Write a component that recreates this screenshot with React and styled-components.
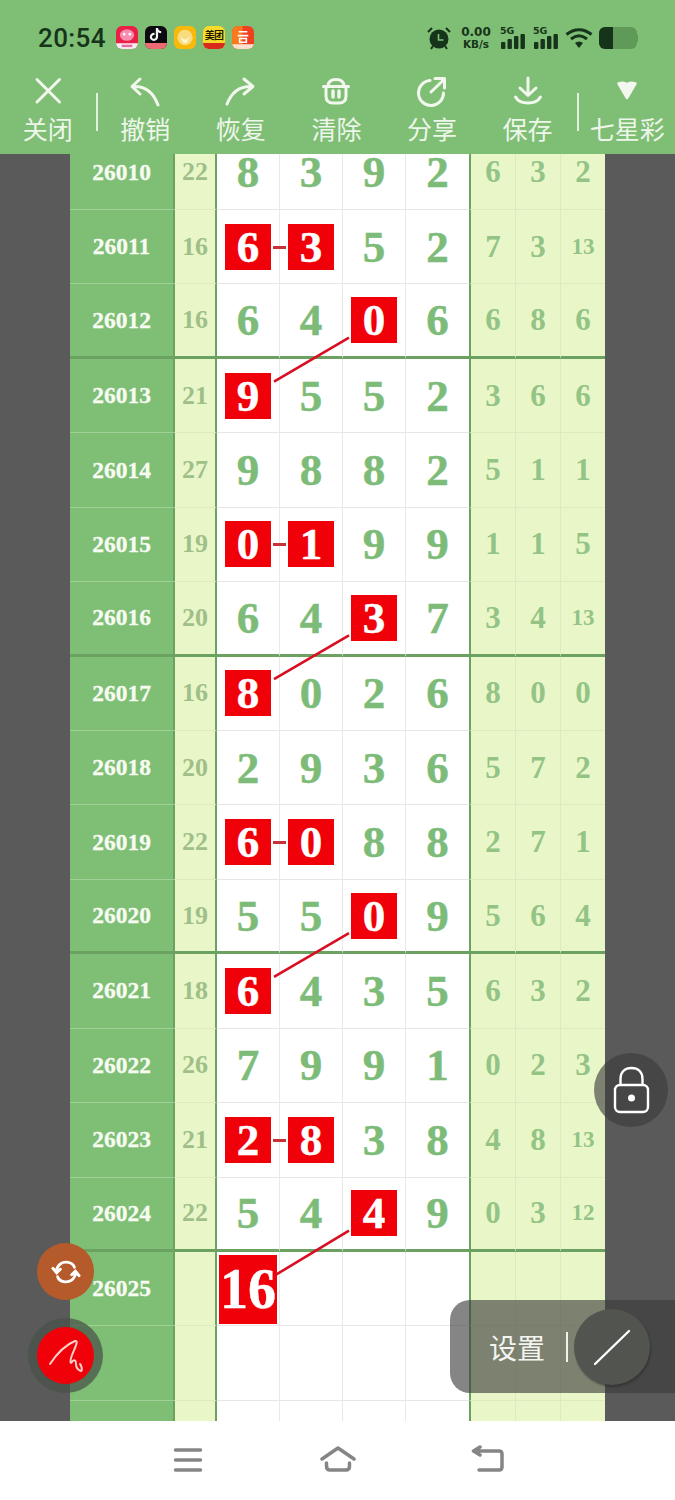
import React from "react";
import styled, { createGlobalStyle } from "styled-components";
import { FaTiktok } from "react-icons/fa6";

const ROW_H = 74.43;
const SCROLL_TOP = 18.4;

const GlobalStyle = createGlobalStyle`
  html, body {
    margin: 0;
    padding: 0;
    background: #fff;
  }
  * {
    box-sizing: border-box;
  }
`;

const Screen = styled.div`
  width: 675px;
  height: 1500px;
  display: flex;
  flex-direction: column;
  position: relative;
  overflow: hidden;
  font-family: "Noto Sans CJK SC", "Noto Sans", sans-serif;
`;

const Header = styled.header`
  height: 154px;
  flex: none;
  background: #7fbe75;
  display: flex;
  flex-direction: column;
  position: relative;
  z-index: 2;
`;

const StatusBar = styled.div`
  height: 75px;
  display: flex;
  align-items: center;
  justify-content: space-between;
  padding: 0 36px 0 38px;
`;

const StatusLeft = styled.div`
  display: flex;
  align-items: center;
`;

const Clock = styled.span`
  font-family: Roboto, sans-serif;
  font-weight: 500;
  font-size: 26px;
  letter-spacing: 0.4px;
  color: #16341a;
  margin-right: 10px;
`;

const AppIcons = styled.div`
  display: flex;
  gap: 7px;
`;

const AppIcon = styled.div`
  width: 22px;
  height: 23px;
  border-radius: 6px;
  overflow: hidden;
  display: flex;
  flex-direction: column;
  align-items: center;
  justify-content: center;
  background: ${(p) => p.$bg};
  position: relative;
`;

const AppStrip = styled.div`
  position: absolute;
  left: 0;
  right: 0;
  bottom: 0;
  height: ${(p) => p.$h || 6}px;
  background: ${(p) => p.$bg};
`;

const MeituanText = styled.span`
  font-size: 10px;
  line-height: 12px;
  font-weight: 700;
  color: #221a00;
  white-space: nowrap;
  margin-top: -5px;
  letter-spacing: -0.8px;
`;

const StatusRight = styled.div`
  display: flex;
  align-items: center;
`;

const SignalGap = styled.div`
  width: 7px;
`;

const WifiIcon = styled.svg`
  margin: 0 6px;
`;

const NetSpeed = styled.div`
  font-family: "DejaVu Sans", sans-serif;
  font-weight: 700;
  color: #16341a;
  display: flex;
  flex-direction: column;
  align-items: center;
  width: 32px;
  margin: 0 8px 0 9px;
`;

const SpeedValue = styled.span`
  font-size: 12px;
  line-height: 13px;
`;

const SpeedUnit = styled.span`
  font-size: 10.5px;
  line-height: 11px;
`;

const Toolbar = styled.nav`
  display: flex;
  align-items: flex-start;
`;

const ToolItem = styled.button`
  width: ${(p) => (p.$wide ? 96 : 95.8)}px;
  height: 79px;
  padding: 0;
  border: 0;
  background: none;
  display: flex;
  flex-direction: column;
  align-items: center;
  color: #eef6ea;
  font-family: inherit;
`;

const ToolIcon = styled.svg`
  width: 32px;
  height: 32px;
  flex: none;
  fill: none;
  stroke: #f3f8ef;
  stroke-width: 3;
  stroke-linecap: round;
  stroke-linejoin: round;
`;

const ToolLabel = styled.span`
  font-size: 25px;
  line-height: 32px;
  margin-top: 5px;
  white-space: nowrap;
`;

const ToolDivider = styled.div`
  width: 2px;
  height: 38px;
  margin-top: 18px;
  margin-left: ${(p) => p.$offset || 0}px;
  flex: none;
  background: #e4f0de;
`;

const Main = styled.main`
  flex: 1;
  min-height: 0;
  background: #5a5a5a;
  overflow: hidden;
  display: flex;
  justify-content: center;
`;

const Sheet = styled.div`
  width: 535px;
  flex: none;
  margin-top: ${-SCROLL_TOP}px;
  position: relative;
  align-self: flex-start;
`;

const Row = styled.div`
  display: grid;
  grid-template-columns: 103px 44px repeat(4, 63px) 47px 45px 44px;
  height: ${ROW_H}px;
`;

const Cell = styled.div`
  display: flex;
  align-items: center;
  justify-content: center;
  position: relative;
  font-family: "Liberation Serif", "Times New Roman", serif;
  font-weight: 700;
  border-bottom: ${(p) => (p.$thick ? "3px solid #6ba262" : `1px solid ${p.$line}`)};
`;

const IdCell = styled(Cell)`
  background: #7fbe75;
  color: #f7fbf2;
  font-size: 23.5px;
  -webkit-text-stroke: 0.3px #f7fbf2;
`;

const SumCell = styled(Cell)`
  background: #e9f7c8;
  color: #a0bf88;
  font-size: 26px;
  border-left: 2px solid #6ba262;
  border-right: 2px solid #6ba262;
`;

const DrawCell = styled(Cell)`
  background: #fff;
  color: #7dbc78;
  font-size: 45px;
  border-right: 1px solid #e9e9e9;
  -webkit-text-stroke: 0.5px currentColor;

  &:nth-child(6) {
    border-right: 0;
  }
`;

const RedBox = styled.span`
  width: ${(p) => (p.$big ? 58 : 46)}px;
  height: ${(p) => (p.$big ? 69 : 46)}px;
  background: #f00008;
  color: #fff;
  font-size: ${(p) => (p.$big ? 56 : 45)}px;
  display: flex;
  align-items: center;
  justify-content: center;
  flex: none;
  margin-top: ${(p) => (p.$big ? 1 : 0)}px;
`;

const Dash = styled.span`
  position: absolute;
  right: -7px;
  top: 50%;
  width: 13px;
  height: 3px;
  margin-top: -1px;
  background: #c8303a;
  z-index: 1;
`;

const ExtraCell = styled(Cell)`
  background: #e9f7c8;
  color: #93c486;
  font-size: ${(p) => (p.$small ? 23 : 31)}px;
  border-right: 1px solid #dcebbe;
  border-left: ${(p) => (p.$first ? "2px solid #6ba262" : "0")};

  &:last-child {
    border-right: 0;
  }
`;

const LinkLayer = styled.svg`
  position: absolute;
  left: 0;
  top: 0;
  width: 535px;
  height: 1300px;
  pointer-events: none;
`;

const NavBar = styled.footer`
  height: 79px;
  flex: none;
  background: #fff;
  display: flex;
  align-items: flex-start;
  justify-content: center;
  gap: 114px;
  padding-top: 24px;
  position: relative;
  z-index: 2;
`;

const NavIcon = styled.svg`
  width: 36px;
  height: 36px;
  fill: none;
  stroke: #858585;
  stroke-width: 3.5;
  stroke-linecap: round;
  stroke-linejoin: round;
`;

const Float = styled.div`
  position: absolute;
  z-index: 1;
  border-radius: 50%;
  display: flex;
  align-items: center;
  justify-content: center;
`;

const LockButton = styled(Float)`
  left: 594px;
  top: 1053px;
  width: 74px;
  height: 74px;
  background: rgba(58, 58, 58, 0.62);
`;

const SyncButton = styled(Float)`
  left: 37px;
  top: 1243px;
  width: 57px;
  height: 57px;
  background: #b45a2b;
`;

const PenRing = styled(Float)`
  left: 28px;
  top: 1318px;
  width: 75px;
  height: 75px;
  background: rgba(72, 80, 72, 0.72);
`;

const PenButton = styled.div`
  width: 57px;
  height: 57px;
  border-radius: 50%;
  background: #f00008;
  display: flex;
  align-items: center;
  justify-content: center;
`;

const SettingsPanel = styled.div`
  position: absolute;
  z-index: 1;
  left: 450px;
  top: 1300px;
  width: 225px;
  height: 93px;
  border-radius: 20px 0 0 20px;
  background: rgba(58, 58, 58, 0.62);
  display: flex;
  align-items: center;
  padding-left: 39px;
  color: #f4f4f0;
`;

const SettingsLabel = styled.span`
  font-size: 28px;
  line-height: 36px;
`;

const SettingsDivider = styled.div`
  width: 2px;
  height: 30px;
  background: #f0f0ec;
  margin-left: 21px;
`;

const PenToggle = styled.div`
  width: 76px;
  height: 76px;
  margin-left: 6px;
  border-radius: 50%;
  background: #525450;
  box-shadow: 1px 2px 2px rgba(40, 40, 40, 0.55);
  display: flex;
  align-items: center;
  justify-content: center;
`;

const rows = [
  ["26010", "22", "8392", ["6", "3", "2"]],
  ["26011", "16", "6352", ["7", "3", "13"], [0, 1], true],
  ["26012", "16", "6406", ["6", "8", "6"], [2]],
  ["26013", "21", "9552", ["3", "6", "6"], [0]],
  ["26014", "27", "9882", ["5", "1", "1"]],
  ["26015", "19", "0199", ["1", "1", "5"], [0, 1], true],
  ["26016", "20", "6437", ["3", "4", "13"], [2]],
  ["26017", "16", "8026", ["8", "0", "0"], [0]],
  ["26018", "20", "2936", ["5", "7", "2"]],
  ["26019", "22", "6088", ["2", "7", "1"], [0, 1], true],
  ["26020", "19", "5509", ["5", "6", "4"], [2]],
  ["26021", "18", "6435", ["6", "3", "2"], [0]],
  ["26022", "26", "7991", ["0", "2", "3"]],
  ["26023", "21", "2838", ["4", "8", "13"], [0, 1], true],
  ["26024", "22", "5449", ["0", "3", "12"], [2]],
];

// row index of the top box of each red connector
const linkRows = [2, 6, 10, 14];

function BlankRow({ id, big }) {
  return (
    <Row>
      <IdCell $line="#9fd095">{id}</IdCell>
      <SumCell $line="#dcebbe" />
      <DrawCell $line="#e6e6e6">
        {big && <RedBox $big>{big}</RedBox>}
      </DrawCell>
      <DrawCell $line="#e6e6e6" />
      <DrawCell $line="#e6e6e6" />
      <DrawCell $line="#e6e6e6" />
      <ExtraCell $first $line="#dcebbe" />
      <ExtraCell $line="#dcebbe" />
      <ExtraCell $line="#dcebbe" />
    </Row>
  );
}

function DataRow({ row, index }) {
  const [id, sum, digits, extras, marks = [], dash] = row;
  const thick = index % 4 === 2;
  return (
    <Row>
      <IdCell $line="#9fd095" $thick={thick}>{id}</IdCell>
      <SumCell $line="#dcebbe" $thick={thick}>{sum}</SumCell>
      {digits.split("").map((d, i) => (
        <DrawCell key={i} $line="#e6e6e6" $thick={thick}>
          {marks.includes(i) ? <RedBox>{d}</RedBox> : d}
          {dash && i === 0 && <Dash />}
        </DrawCell>
      ))}
      {extras.map((e, i) => (
        <ExtraCell key={i} $first={i === 0} $small={e.length > 1} $line="#dcebbe" $thick={thick}>
          {e}
        </ExtraCell>
      ))}
    </Row>
  );
}

function Links() {
  return (
    <LinkLayer viewBox="0 0 535 1300">
      {linkRows.map((r) => {
        const y1 = (r + 0.5) * ROW_H + 15.5;
        const y2 = (r + 1.5) * ROW_H - 15;
        return (
          <line
            key={r}
            x1="279"
            y1={y1}
            x2={r === 14 ? 206 : 204}
            y2={y2}
            stroke="#d80f22"
            strokeWidth="2.6"
          />
        );
      })}
    </LinkLayer>
  );
}

function StatusIcons() {
  return (
    <AppIcons>
      <AppIcon $bg="#ea1f45">
        <svg width="22" height="23" viewBox="0 0 23 24">
          <ellipse cx="11.5" cy="9.5" rx="7.5" ry="6" fill="#f88db0" />
          <circle cx="8.5" cy="8.5" r="1.4" fill="#fff" />
          <circle cx="14.5" cy="8.5" r="1.4" fill="#fff" />
          <rect x="0" y="18" width="23" height="6" fill="#f7eef5" />
          <rect x="6" y="19.5" width="11" height="2.5" fill="#e86aa0" />
        </svg>
      </AppIcon>
      <AppIcon $bg="#0c0a10">
        <FaTiktok size={13} color="#f4f4f6" style={{ marginTop: -6 }} />
        <AppStrip $bg="#ef6a72" />
      </AppIcon>
      <AppIcon $bg="#f9b90a">
        <svg width="22" height="23" viewBox="0 0 23 24">
          <circle cx="11.5" cy="12" r="8" fill="#f7dd80" />
          <path d="M7 11 Q11.5 17 16 11 Q14 19 11.5 17.5 Q9 19 7 11Z" fill="#fff6d0" />
        </svg>
      </AppIcon>
      <AppIcon $bg="#f9da2b">
        <MeituanText>美团</MeituanText>
        <AppStrip $bg="#d92a1c" />
      </AppIcon>
      <AppIcon $bg="#f0401f">
        <svg width="22" height="23" viewBox="0 0 23 24">
          <rect x="0" y="0" width="11" height="24" fill="#f97a1e" />
          <path d="M7 6h9M6 10h11M8 13h7v4H8z" stroke="#fff" strokeWidth="1.7" fill="none" />
          <rect x="0" y="19" width="23" height="5" fill="#fbe0d0" />
        </svg>
      </AppIcon>
    </AppIcons>
  );
}

function SignalIcon() {
  return (
    <svg width="26" height="24" viewBox="0 0 26 24">
      <text x="0" y="8" fontFamily="'DejaVu Sans', sans-serif" fontWeight="700" fontSize="9.5" fill="#16341a">5G</text>
      <rect x="1" y="16" width="4.4" height="7" rx="1" fill="#16341a" />
      <rect x="7.5" y="13" width="4.4" height="10" rx="1" fill="#16341a" />
      <rect x="14" y="10" width="4.4" height="13" rx="1" fill="#16341a" />
      <rect x="20.5" y="8" width="4.4" height="15" rx="1" fill="#16341a" />
    </svg>
  );
}

function StatusBarRight() {
  return (
    <StatusRight>
      <svg width="24" height="24" viewBox="0 0 24 24">
        <circle cx="12" cy="13" r="9.5" fill="#16341a" />
        <path d="M11.5 8v6h5" stroke="#7fbe75" strokeWidth="1.6" fill="none" />
        <path d="M1 6l4-4M23 6l-4-4M4 23l2-3M20 23l-2-3" stroke="#16341a" strokeWidth="2" />
      </svg>
      <NetSpeed>
        <SpeedValue>0.00</SpeedValue>
        <SpeedUnit>KB/s</SpeedUnit>
      </NetSpeed>
      <SignalIcon />
      <SignalGap />
      <SignalIcon />
      <WifiIcon width="28" height="22" viewBox="0 0 28 22">
        <path d="M1.5 7.5C9 1 19 1 26.5 7.5" stroke="#16341a" strokeWidth="3" fill="none" />
        <path d="M6 12C11 8 17 8 22 12" stroke="#16341a" strokeWidth="3" fill="none" />
        <path d="M10 16C12.5 14 15.5 14 18 16L14 21Z" fill="#16341a" />
      </WifiIcon>
      <svg width="40" height="24" viewBox="0 0 40 24">
        <rect x="0" y="1" width="38" height="22" rx="6" fill="#5f9a58" />
        <rect x="36" y="8" width="3" height="8" rx="1" fill="#5f9a58" />
        <path d="M6 1H14V23H6A6 6 0 0 1 0 17V7A6 6 0 0 1 6 1Z" fill="#16341a" />
      </svg>
    </StatusRight>
  );
}

export default function App() {
  return (
    <Screen>
      <GlobalStyle />
      <Header>
        <StatusBar>
          <StatusLeft>
            <Clock>20:54</Clock>
            <StatusIcons />
          </StatusLeft>
          <StatusBarRight />
        </StatusBar>
        <Toolbar>
          <ToolItem>
            <ToolIcon viewBox="0 0 32 32">
              <path d="M5 4.5L27.5 27M27.5 4.5L5 27" />
            </ToolIcon>
            <ToolLabel>关闭</ToolLabel>
          </ToolItem>
          <ToolDivider />
          <ToolItem>
            <ToolIcon viewBox="0 0 32 32">
              <path d="M11 4L3 11.5L11 19M3 11.5C15 10.5 24 16 29 30" />
            </ToolIcon>
            <ToolLabel>撤销</ToolLabel>
          </ToolItem>
          <ToolItem>
            <ToolIcon viewBox="0 0 32 32">
              <path d="M19 4L28 11.5L19 19M28 11.5C16 10.5 7 16 2 29" />
            </ToolIcon>
            <ToolLabel>恢复</ToolLabel>
          </ToolItem>
          <ToolItem>
            <ToolIcon viewBox="0 0 32 32">
              <path d="M3.5 11.5H28.5M8 11.5C8 6.5 11 4.5 16 4.5C21 4.5 24 6.5 24 11.5M6 11.5V21C6 25.5 8.5 28 13 28H19C23.5 28 26 25.5 26 21V11.5" />
              <path d="M13 16V22M19 16V22" strokeWidth="3.4" />
            </ToolIcon>
            <ToolLabel>清除</ToolLabel>
          </ToolItem>
          <ToolItem>
            <ToolIcon viewBox="0 0 32 32">
              <path d="M14 5.5A12.5 12.5 0 1 0 27.5 18" />
              <path d="M15 17L28 4.5M19 3.5H28.5V13" />
            </ToolIcon>
            <ToolLabel>分享</ToolLabel>
          </ToolItem>
          <ToolItem>
            <ToolIcon viewBox="0 0 32 32">
              <path d="M16 3V20M8 13L16 20.5L24 13M3.5 22C8 30 24 30 28.5 22" />
            </ToolIcon>
            <ToolLabel>保存</ToolLabel>
          </ToolItem>
          <ToolDivider $offset={2} />
          <ToolItem $wide>
            <ToolIcon viewBox="0 0 32 32">
              <path d="M7.5 8.5C10.5 7.5 14 7.5 16 9.5C18 7.500 21.5 7.5 24.5 8.5L16 23Z" fill="#f3f8ef" strokeWidth="2.5" />
            </ToolIcon>
            <ToolLabel>七星彩</ToolLabel>
          </ToolItem>
        </Toolbar>
      </Header>

      <Main>
        <Sheet>
          {rows.map((row, i) => (
            <DataRow key={row[0]} row={row} index={i} />
          ))}
          <BlankRow id="26025" big="16" />
          <BlankRow />
          <BlankRow />
          <Links />
        </Sheet>
      </Main>

      <NavBar>
        <NavIcon viewBox="0 0 36 36">
          <path d="M5.5 5H30.5M5.5 15H30.5M5.5 25H30.5" />
        </NavIcon>
        <NavIcon viewBox="0 0 36 36">
          <path d="M2 14L18 3L34 14M6.5 18V21C6.5 23.5 8 25 10 25H26C28 25 29.5 23.5 29.5 21V18" />
        </NavIcon>
        <NavIcon viewBox="0 0 36 36">
          <path d="M10 2L3.5 6L10 10M3.5 6H29C31 6 32 7 32 9V22C32 24 31 25 29 25H9" />
        </NavIcon>
      </NavBar>

      <LockButton>
        <svg width="37" height="48" viewBox="0 0 37 48" fill="none">
          <path d="M7.5 20V13C7.5 6 12 2 18.5 2C25 2 29.5 6 29.5 13V20" stroke="#fff" strokeWidth="2.4" />
          <rect x="2" y="19" width="33" height="27" rx="5" stroke="#fff" strokeWidth="2.4" />
          <circle cx="18.5" cy="32" r="3.5" fill="#fff" />
        </svg>
      </LockButton>

      <SyncButton>
        <svg width="30" height="30" viewBox="0 0 32 32" fill="none" stroke="#fff" strokeWidth="3" strokeLinecap="round">
          <path d="M6 14C7 8 12 5 17 5.5C21 6 24 8 25 11" />
          <path d="M26 18C25 24 20 27 15 26.5C11 26 8 24 7 21" />
          <path d="M2 12L6 17L10 13" fill="#fff" />
          <path d="M22 19L26 15L30 20" fill="#fff" />
        </svg>
      </SyncButton>

      <PenRing>
        <PenButton>
          <svg width="36" height="36" viewBox="0 0 36 36" fill="none" stroke="#ffd0c8" strokeWidth="2" strokeLinecap="round" strokeLinejoin="round">
            <path d="M2 26C8 17 17 7 27 3C31 2 27 10 24 17C22 22 22 27 24 24C26 21 28 22 28 26C28 30 30 32 33 33C35 32 33 27 32 26" />
          </svg>
        </PenButton>
      </PenRing>

      <SettingsPanel>
        <SettingsLabel>设置</SettingsLabel>
        <SettingsDivider />
        <PenToggle>
          <svg width="40" height="40" viewBox="0 0 40 40">
            <path d="M3 37L37 4" stroke="#fff" strokeWidth="2.4" strokeLinecap="round" />
          </svg>
        </PenToggle>
      </SettingsPanel>
    </Screen>
  );
}
